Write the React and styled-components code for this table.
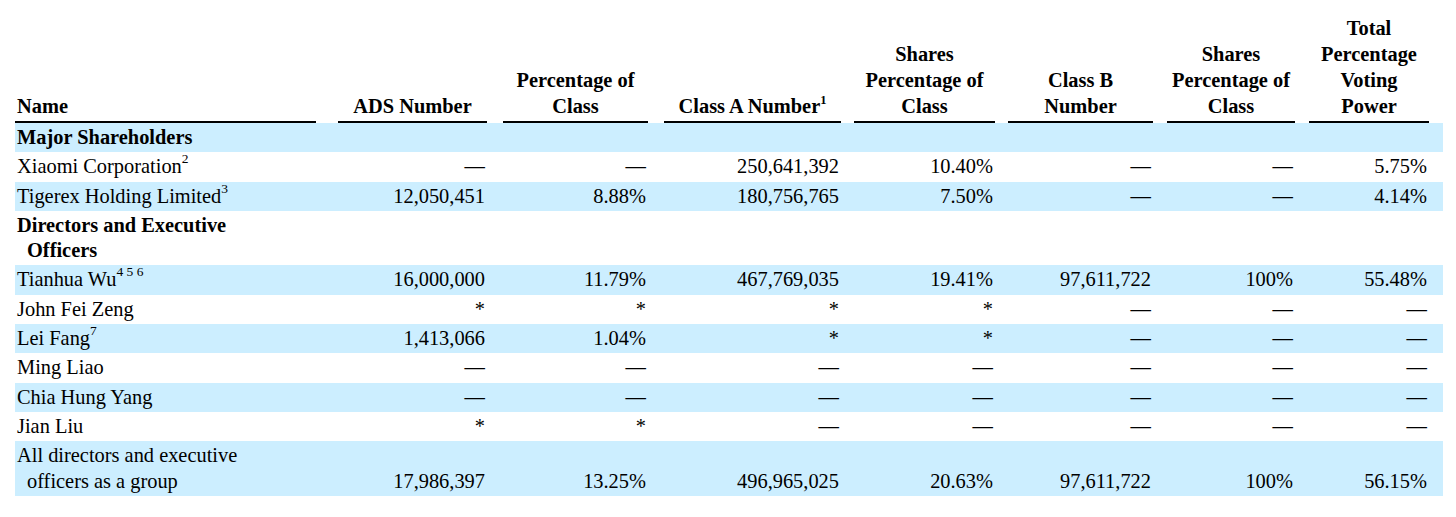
import React from 'react'
import styled, { createGlobalStyle } from 'styled-components'

const GlobalStyle = createGlobalStyle`
    html, body {
        margin: 0;
        padding: 0;
        background: #fff;
    }
    body {
        font-family: "Liberation Serif", "Times New Roman", serif;
        color: #000;
    }
`

// column tracks; each data column carries its own left gap
const COLS = '301px 171px 161px 193px 154px 158px 142px 134px'
const GAPS = [0, 22, 16, 16, 13, 13, 14, 14]

const HEADERS = [
    { lines: ['Name'] },
    { lines: ['ADS Number'] },
    { lines: ['Percentage of', 'Class'] },
    { lines: ['Class A Number'], sup: '1' },
    { lines: ['Shares', 'Percentage of', 'Class'] },
    { lines: ['Class B', 'Number'] },
    { lines: ['Shares', 'Percentage of', 'Class'] },
    { lines: ['Total', 'Percentage', 'Voting', 'Power'] },
]

const D = '—'

const ROWS = [
    { section: 'Major Shareholders' },
    { name: 'Xiaomi Corporation', sup: '2', values: [D, D, '250,641,392', '10.40%', D, D, '5.75%'] },
    { name: 'Tigerex Holding Limited', sup: '3', values: ['12,050,451', '8.88%', '180,756,765', '7.50%', D, D, '4.14%'] },
    { section: 'Directors and Executive Officers' },
    { name: 'Tianhua Wu', sup: '4 5 6', values: ['16,000,000', '11.79%', '467,769,035', '19.41%', '97,611,722', '100%', '55.48%'] },
    { name: 'John Fei Zeng', values: ['*', '*', '*', '*', D, D, D] },
    { name: 'Lei Fang', sup: '7', values: ['1,413,066', '1.04%', '*', '*', D, D, D] },
    { name: 'Ming Liao', values: [D, D, D, D, D, D, D] },
    { name: 'Chia Hung Yang', values: [D, D, D, D, D, D, D] },
    { name: 'Jian Liu', values: ['*', '*', D, D, D, D, D] },
    { name: 'All directors and executive officers as a group', values: ['17,986,397', '13.25%', '496,965,025', '20.63%', '97,611,722', '100%', '56.15%'] },
]

const App = () => {
    return (
        <>
            <GlobalStyle />
            <Page>
                <Table>
                    <HeadRow>
                        {HEADERS.map((h, i) => (
                            <HeadCell key={i} $gap={GAPS[i]} $left={i === 0}>
                                {h.lines.map((l, j) => (
                                    <React.Fragment key={j}>
                                        {j > 0 && <br />}
                                        {l}
                                    </React.Fragment>
                                ))}
                                {h.sup && <Sup $head>{h.sup}</Sup>}
                            </HeadCell>
                        ))}
                    </HeadRow>
                    {ROWS.map((row, i) => (
                        <Row key={i} $shade={i % 2 === 0}>
                            {row.section ? (
                                <NameCell $bold>{row.section}</NameCell>
                            ) : (
                                <>
                                    <NameCell>
                                        {row.name}
                                        {row.sup && <Sup>{row.sup}</Sup>}
                                    </NameCell>
                                    {row.values.map((v, j) => (
                                        <ValueCell key={j} $gap={GAPS[j + 1]}>{v}</ValueCell>
                                    ))}
                                </>
                            )}
                        </Row>
                    ))}
                </Table>
            </Page>
        </>
    )
}

const Page = styled.div`
    padding: 15px 0 0 15px;
`

const Table = styled.div`
    width: 1428px;
    font-size: 20.4px;
`

const Grid = styled.div`
    display: grid;
    grid-template-columns: ${COLS};
    padding-right: 14px;
    align-items: end;
`

const HeadRow = styled(Grid)`
    font-weight: bold;
    line-height: 26px;
`

const HeadCell = styled.div`
    margin-left: ${p => p.$gap}px;
    border-bottom: 2px solid #000;
    padding: 0 0 2px ${p => (p.$left ? 2 : 0)}px;
    text-align: ${p => (p.$left ? 'left' : 'center')};
    white-space: nowrap;
`

const Row = styled(Grid)`
    background: ${p => (p.$shade ? '#cceeff' : '#fff')};
    line-height: 25.3px;
`

const NameCell = styled.div`
    padding: 2px 30px 2px 12px;
    text-indent: -10px;
    font-weight: ${p => (p.$bold ? 'bold' : 'normal')};
    grid-column: ${p => (p.$bold ? '1 / span 2' : 'auto')};
    max-width: ${p => (p.$bold ? '259px' : 'none')};
`

const ValueCell = styled.div`
    padding: 2px 2px 2px ${p => p.$gap}px;
    text-align: right;
    white-space: nowrap;
`

const Sup = styled.sup`
    font-size: ${p => (p.$head ? '12.5px' : '13.5px')};
    line-height: 0;
    vertical-align: ${p => (p.$head ? '9px' : '10px')};
`

export default App
